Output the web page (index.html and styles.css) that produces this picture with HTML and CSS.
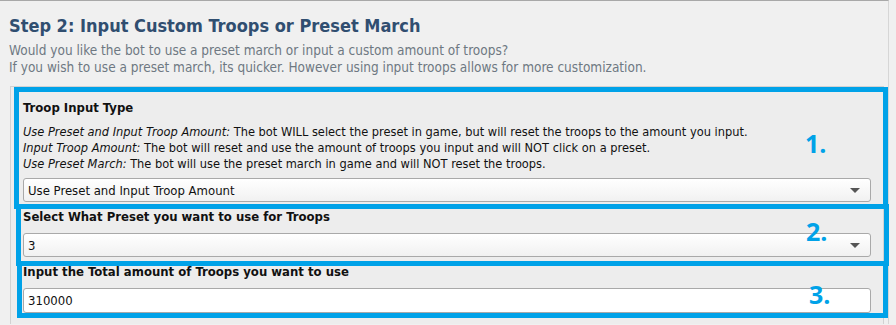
FILE: index.html
```html
<!DOCTYPE html>
<html lang="en">

<head>
    <meta charset="UTF-8">
    <meta name="viewport" content="width=device-width, initial-scale=1.0">
    <title>Step 2: Input Custom Troops or Preset March</title>
    <link rel="stylesheet" href="styles.css">
</head>

<body>
    <div class="page">
        <h2 class="step-title">Step 2: Input Custom Troops or Preset March</h2>
        <p class="step-intro">
            Would you like the bot to use a preset march or input a custom amount of troops?<br>
            If you wish to use a preset march, its quicker. However using input troops allows for more customization.
        </p>

        <div class="panel">
            <div class="field">
                <label class="field-label">Troop Input Type</label>
                <div class="field-help">
                    <em>Use Preset and Input Troop Amount:</em> The bot WILL select the preset in game, but will reset the troops to the amount you input.<br>
                    <em>Input Troop Amount:</em> The bot will reset and use the amount of troops you input and will NOT click on a preset.<br>
                    <em>Use Preset March:</em> The bot will use the preset march in game and will NOT reset the troops.
                </div>
                <div class="select">
                    <span>Use Preset and Input Troop Amount</span>
                    <span class="caret"></span>
                </div>
            </div>

            <div class="field">
                <label class="field-label">Select What Preset you want to use for Troops</label>
                <div class="select">
                    <span>3</span>
                    <span class="caret"></span>
                </div>
            </div>

            <div class="field">
                <label class="field-label">Input the Total amount of Troops you want to use</label>
                <input type="text" class="text-input" value="310000">
            </div>
        </div>
    </div>

    <!-- annotation boxes drawn over the form -->
    <div class="mark mark-1"></div>
    <div class="mark mark-2"></div>
    <div class="mark mark-3"></div>
    <span class="mark-num num-1">1.</span>
    <span class="mark-num num-2">2.</span>
    <span class="mark-num num-3">3.</span>
</body>

</html>
```

FILE: styles.css
```css
:root {
    --page-bg: #f0f0f0;
    --panel-bg: #ededed;
    --panel-border: #d2d2d2;
    --title-color: #304e70;
    --intro-color: #6e7882;
    --text-color: #111111;
    --input-border: #a9a9a9;
    --mark-color: #00a2e8;
}

body {
    margin: 0;
    position: relative;
    background-color: var(--page-bg);
    font-family: "DejaVu Sans Condensed", "DejaVu Sans", sans-serif;
    color: var(--text-color);
}

.page {
    width: 889px;
    height: 324px;
    padding-left: 9px;
    box-sizing: border-box;
    border-top: 1px solid #a8a8a8;
    border-right: 1px solid #d6d6d6;
    overflow: hidden;
}

.step-title {
    margin: 0;
    padding-top: 14px;
    font-size: 18px;
    line-height: 22px;
    color: var(--title-color);
}

.step-intro {
    margin: 5px 0 0;
    font-size: 13.5px;
    line-height: 17px;
    color: var(--intro-color);
}

.panel {
    width: 874px;
    margin: 10px 0 0 1px;
    padding: 13px 12px 0;
    box-sizing: border-box;
    height: 260px;
    background-color: var(--panel-bg);
    border: 1px solid var(--panel-border);
    border-bottom: none;
}

.field {
    margin-bottom: 7px;
}

.field-label {
    display: block;
    font-weight: bold;
    font-size: 13px;
    line-height: 16px;
    margin-bottom: 8px;
}

.field-help {
    font-size: 12.7px;
    line-height: 16px;
    margin-bottom: 6px;
}

.select,
.text-input {
    display: flex;
    align-items: center;
    justify-content: space-between;
    width: 100%;
    height: 24px;
    padding: 0 10px 0 4px;
    box-sizing: border-box;
    border: 1px solid var(--input-border);
    border-radius: 3px;
    font-family: inherit;
    font-size: 13px;
    color: var(--text-color);
    background: linear-gradient(#ffffff, #f1f1f1);
}

.text-input {
    height: 25px;
    background: #ffffff;
    outline: none;
}

.caret {
    width: 0;
    height: 0;
    border-left: 5px solid transparent;
    border-right: 5px solid transparent;
    border-top: 5px solid #555555;
}

.mark {
    position: absolute;
    box-sizing: border-box;
    border: 5px solid var(--mark-color);
}

.mark-1 {
    left: 14px;
    top: 87px;
    width: 874px;
    height: 122px;
}

.mark-2 {
    left: 16px;
    top: 204px;
    width: 873px;
    height: 62px;
}

.mark-3 {
    left: 17px;
    top: 261px;
    width: 871px;
    height: 57px;
}

.mark-num {
    position: absolute;
    font-family: "Open Sans", sans-serif;
    font-weight: 700;
    font-size: 25px;
    line-height: 1;
    color: var(--mark-color);
}

.num-1 {
    left: 805px;
    top: 131px;
}

.num-2 {
    left: 806px;
    top: 219px;
}

.num-3 {
    left: 809px;
    top: 282px;
}
```
